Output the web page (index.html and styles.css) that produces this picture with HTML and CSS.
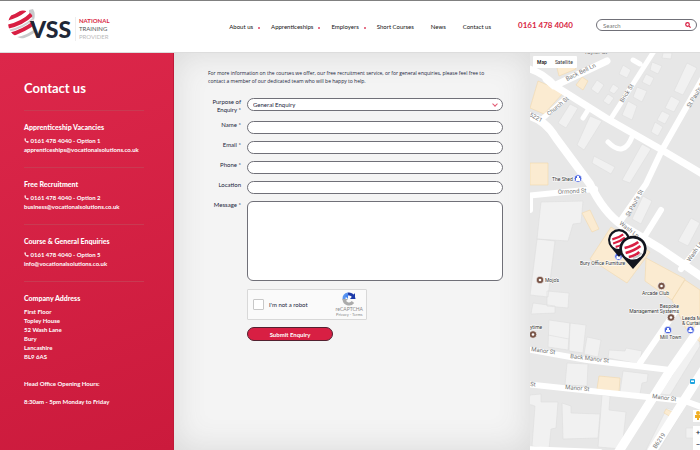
FILE: index.html
```html
<!DOCTYPE html>
<html lang="en">
<head>
<meta charset="utf-8">
<title>Contact us | VSS</title>
<link rel="stylesheet" href="styles.css">
</head>
<body>
<header class="header">
  <a class="logo" href="#" aria-label="VSS home">
    <svg class="logo-mark" width="67" height="34" viewBox="7 8 67 34">
      <defs><clipPath id="globe"><path d="M19 11 Q27 9 32 15 L38 36 Q30 41 20 38 Q8 34 8 22 Q10 13 19 11Z"/></clipPath></defs>
      <path d="M29 10 l4 -1 q3 5 1 11 l-5 -5z" fill="#c9cacc"/>
      <g clip-path="url(#globe)" fill="none">
        <path d="M6 19 Q16 17 25 10" stroke="#d81f43" stroke-width="4"/>
        <path d="M6 27 Q22 24 32 14" stroke="#d81f43" stroke-width="4"/>
        <path d="M8 31 Q23 28 34 18" stroke="#d0d1d3" stroke-width="2"/>
        <path d="M9 35 Q24 31 35 22" stroke="#d81f43" stroke-width="4"/>
        <path d="M15 39 Q28 37 37 29" stroke="#c9cacc" stroke-width="3"/>
      </g>
      <text class="logo-name" x="30" y="38">VSS</text>
    </svg>
    <span class="tagline"><b>NATIONAL</b><span>TRAINING</span><i>PROVIDER</i></span>
  </a>
  <nav class="nav">
    <a class="has-menu" href="#">About us</a>
    <a class="has-menu" href="#">Apprenticeships</a>
    <a class="has-menu" href="#">Employers</a>
    <a href="#">Short Courses</a>
    <a href="#">News</a>
    <a href="#">Contact us</a>
  </nav>
  <a class="phone" href="tel:01614784040">0161 478 4040</a>
  <form class="search">
    <input type="search" placeholder="Search" aria-label="Search">
    <button type="button" aria-label="Search"><svg width="6" height="6" viewBox="0 0 6 6"><circle cx="2.5" cy="2.5" r="1.8"/><path d="M4 4 L5.6 5.6"/></svg></button>
  </form>
</header>
<main class="page">
  <aside class="sidebar">
    <h1>Contact us</h1>
    <section>
      <h2>Apprenticeship Vacancies</h2>
      <p><svg class="tel" viewBox="0 0 10 10"><path d="M1 1 L3 .5 L4 3 L3 4 Q4 6 6 7 L7 6 L9.500 7 L9 9 Q7 10 4 8 Q0 5 1 1Z"/></svg> 0161 478 4040 - Option 1<br><a href="#">apprenticeships@vocationalsolutions.co.uk</a></p>
    </section>
    <section>
      <h2>Free Recruitment</h2>
      <p><svg class="tel" viewBox="0 0 10 10"><path d="M1 1 L3 .5 L4 3 L3 4 Q4 6 6 7 L7 6 L9.500 7 L9 9 Q7 10 4 8 Q0 5 1 1Z"/></svg> 0161 478 4040 - Option 2<br><a href="#">business@vocationalsolutions.co.uk</a></p>
    </section>
    <section>
      <h2>Course &amp; General Enquiries</h2>
      <p><svg class="tel" viewBox="0 0 10 10"><path d="M1 1 L3 .5 L4 3 L3 4 Q4 6 6 7 L7 6 L9.500 7 L9 9 Q7 10 4 8 Q0 5 1 1Z"/></svg> 0161 478 4040 - Option 5<br><a href="#">info@vocationalsolutions.co.uk</a></p>
    </section>
    <section>
      <h2>Company Address</h2>
      <p>First Floor<br>Topley House<br>52 Wash Lane<br>Bury<br>Lancashire<br>BL9 6AS</p>
      <p class="hours">Head Office Opening Hours:</p>
      <p class="times">8:30am - 5pm Monday to Friday</p>
    </section>
  </aside>
  <form class="enquiry">
    <p class="intro">For more information on the courses we offer, our free recruitment service, or for general enquiries, please feel free to contact a member of our dedicated team who will be happy to help.</p>
    <div class="fields">
      <label for="purpose">Purpose of Enquiry *</label>
      <div class="select"><select id="purpose"><option>General Enquiry</option></select></div>
      <label for="name">Name *</label><input id="name" type="text">
      <label for="email">Email *</label><input id="email" type="email">
      <label for="phone">Phone *</label><input id="phone" type="tel">
      <label for="location">Location</label><input id="location" type="text">
      <label for="message">Message *</label><textarea id="message"></textarea>
      <div class="captcha">
        <input id="robot" type="checkbox"><label for="robot">I'm not a robot</label>
        <div class="brand">
          <svg width="14" height="14" viewBox="0 0 14 14" fill="none" stroke-width="3">
            <path d="M2 7 A5 5 0 0 1 6 2" stroke="#5b95ee"/><path d="M6 2 A5 5 0 0 1 12 7" stroke="#1c3aa9"/><path d="M13 1 V7 H8Z" fill="#1c3aa9"/><path d="M6 2 V7 L3 4Z" fill="#4285f4"/><path d="M2 7 A5 5 0 0 0 11 10" stroke="#ababab"/><path d="M0 7 H6 L3 10Z" fill="#ababab"/>
          </svg>
          <span>reCAPTCHA</span><small>Privacy - Terms</small>
        </div>
      </div>
      <button class="submit" type="submit">Submit Enquiry</button>
    </div>
  </form>
  <section class="map" aria-label="Map">
    <svg class="streets" viewBox="530 53 170 397" preserveAspectRatio="xMinYMin slice">
      <rect x="530" y="53" width="400" height="800" fill="#e7e7e7"/>
      <g fill="#f1f1f1" stroke="#dedede" stroke-width=".6">
        <path d="M597 80l7 5-6 9-7-5zM613 84l6 4-5 6-5-3zM623 65l8 5-4 8-8-4zM608 94l6 4-5 7-6-4zM652 62l10 4-4 8-8-4zM646 74l8 4-4 8-8-4zM637 87l10 4-5 11-9-5zM628 101l9 5-5 14-10-5z"/>
        <path d="M570 104l8 4-12 20-8-5zM590 116l12 5-18 29-7-5zM594 156l21 11-4 7-19-11zM642 144l9 5-21 34-8-3zM687 63l10 5-14 27-9-4zM671 96l9 5-6 11-9-4zM662 111l8 4-5 9-8-4zM655 122l8 5-5 9-7-4zM663 53h9l-1 6-9-1z"/>
        <path d="M541 202l42-1-2 22-8 1-5 17-31-2zM537 239l18 2-7 56-18-2zM643 196l9 5-11 23-9-5zM691 218l9 5-12 23-10-5zM547 291l22 2-1 15-21-2zM533 303l22 3v7l-24 1z"/>
        <path d="M549 320l21 3-2 27-20-3zM570 323l16 2-3 28-14-2zM587 337l14 3-3 17-14-3zM548 335l21 4M567 363l21 1-1 22-22-1zM609 350l16 1 1-3 16 3-3 13-31-6zM623 371l25 3-1 8-5 1-2 11-20-2zM530 395l11-1v8h17l-2 26-5 1-2 20-17-3 3-40-7-2zM562 403l9 3v7l29 1-2 24-35 1zM602 395l8 1-1 14 17 2-4 37-24-2zM660 394l38-58 2 10-30 49zM667 408l14 5-22 37h-13zM686 428h12v10h-12z"/>
      </g>
      <g fill="#fbebd1" stroke="#f1d9ad" stroke-width=".6">
        <path d="M538 81l26 11-20 22-14-6zM557 68l15-6 4 7-17 7zM582 77l6 4-5 9-7-5zM530 163h18v22h-18zM582 213l8-3 9 19-7 3zM611 227l39 25-23 31-37-24zM646 258l39 21-13 21-27-19zM685 280l15 10v52l-14-13-14-29zM599 376l21 2-1 14-22-3zM666 409l8 4-3 4-7-4z"/>
      </g>
      <g fill="none" stroke="#fff" stroke-linecap="round" stroke-linejoin="round" stroke-width="6">
        <path d="M526 68Q543 72 555 86L606 118 662 150 704 175M546 79L554 86 607 61" stroke-width="7"/>
        <path d="M610 120L656 48M640 64L633 60M588 110L583 118M608 142Q624 158 632 137M565 99L542 119" stroke-width="5"/>
        <path d="M525 115Q544 118 556 138L590 184Q603 212 623 226L661 249 705 279" stroke-width="8"/>
        <path d="M704 76L662 150 646 184 619 223M661 210L643 239M704 241L681 269"/>
        <path d="M525 196L595 189M530 196V210M526 349L587 360 670 370M675 312L640 363M526 384L685 401 704 408M526 449L600 452"/>
        <path d="M700 328L668 374 616 456M704 369L650 454" stroke-width="9"/>
      </g>
      <g class="street-names">
        <text transform="translate(567 81) rotate(-26)">Back Bell Ln</text><text transform="translate(623 103) rotate(-58)">Brick St</text><text transform="translate(549 116) rotate(-40)">Church St</text><text transform="translate(690 108) rotate(-59)">St Paul's St</text><text transform="translate(529 116) rotate(28)">5221</text>
        <text transform="translate(558 194) rotate(-3)">Ormond St</text><text transform="translate(629 217) rotate(-61)">St Paul's St</text><text transform="translate(619 224) rotate(38)">Wash Ln</text><text transform="translate(690 262) rotate(-56)">Wash Ln</text>
        <text transform="translate(531 351) rotate(8)">Manor St</text><text transform="translate(570 358) rotate(7)">Back Manor St</text><text transform="translate(530 386) rotate(5)">St</text><text transform="translate(565 389) rotate(5)">Manor St</text><text transform="translate(652 398) rotate(8)">Manor St</text><text transform="translate(656 449) rotate(-56)">B6219</text><text x="584" y="54">Taylor St</text>
      </g>
      <g class="places">
        <text x="552" y="181">The Shed</text><text x="580" y="265">Bury Office Furniture</text><text x="545" y="282">Mojo's</text><text x="642" y="295">Arcade Club</text><text x="679" y="308" text-anchor="end">Bespoke</text><text x="679" y="313" text-anchor="end">Management Systems</text><text x="682" y="320">Leeda Mills</text><text x="682" y="325">&amp; Curtains</text><text x="660" y="339">Mill Town</text><text x="530" y="329">ytime</text>
      </g>
      <g stroke="#fff" stroke-width=".7">
        <g fill="#4b65df"><circle cx="578" cy="178.500" r="3.800"/><circle cx="618.500" cy="256.500" r="3.800"/><circle cx="668" cy="330" r="3.800"/><circle cx="690.500" cy="330" r="3.800"/></g>
        <g fill="#795548"><circle cx="540" cy="280" r="3.800"/><circle cx="661.500" cy="286" r="3.800"/><circle cx="671" cy="317.500" r="3.800"/><circle cx="533" cy="334.500" r="3.800"/></g>
      </g>
      <g fill="#fff"><path d="M576 178h4v3h-4zM577 176h2v2h-2zM616.500 256h4v3h-4zM666 330h4v2h-4zM667 328h2v2h-2zM688.500 330h4v2h-4zM689.500 328h2v2h-2z"/><circle cx="540" cy="280" r="1.300"/><circle cx="661.500" cy="286" r="1.300"/><circle cx="671" cy="317.500" r="1.300"/><circle cx="533" cy="334.500" r="1.300"/></g>
      <rect x="690" y="379" width="5" height="5" rx="1" fill="#20a5df"/><path d="M691 380.500h3v1.500h-3z" fill="#fff"/>
      <defs>
        <g id="pin">
          <path d="M0 19 L-10 7 A13 13 0 1 1 10 7Z" fill="#11151f"/>
          <circle cy="-1" r="10.500" fill="#fff"/>
          <g fill="none" stroke="#d81f43" stroke-width="2.600"><path d="M-8 -2 Q0 -4 5 -8"/><path d="M-7 3 Q1 1 7 -4"/><path d="M-4 7 Q2 6 6 2"/></g>
          <path d="M0 8 Q5 7 8 3" fill="none" stroke="#c9cacc" stroke-width="1.800"/>
        </g>
      </defs>
      <use href="#pin" transform="translate(619 241) scale(.84)"/>
      <use href="#pin" transform="translate(633 250) scale(1.050 1)"/>
    </svg>
    <div class="map-type"><button type="button"><b>Map</b></button><button type="button">Satellite</button></div>
    <div class="map-tools">
      <button type="button" aria-label="Street View"><svg width="8" height="9" viewBox="0 0 8 9"><circle cx="4" cy="2" r="2" fill="#f0ad22"/><path d="M1 4h6v3H5v2H3V7H1z" fill="#f0ad22"/></svg></button>
      <div class="zoom"><button type="button" aria-label="Zoom in">+</button><button type="button" aria-label="Zoom out">−</button></div>
    </div>
  </section>
</main>
</body>
</html>
```
FILE: styles.css
```css
* { box-sizing: border-box; }
body { margin: 0; min-height: 100vh; display: flex; flex-direction: column; font-family: Lato, sans-serif; font-size: 6px; color: #20243a; background: #fff; overflow: hidden; }
a { color: inherit; text-decoration: none; }
h1, h2, p { margin: 0; }
button, input, select, textarea { font: inherit; color: inherit; margin: 0; padding: 0; }

.header { min-height: 53px; display: flex; align-items: center; padding: 0 3px 3px 7px; border-top: 1px solid #808080; border-bottom: 1px solid #ddd; }
.logo { display: flex; align-items: center; gap: 1px; }
.logo-mark { overflow: visible; }
.logo-name { font: 900 23px Lato, sans-serif; fill: #202736; }
.tagline { display: flex; flex-direction: column; margin-top: 7px; padding-left: 3px; border-left: 1px solid #eee; font-size: 6px; line-height: 8px; color: #555; }
.tagline b { color: #d81f43; font-weight: 700; }
.tagline i { color: #bbb; font-style: normal; }
.nav { display: flex; margin-left: auto; padding-top: 2px; gap: 17px; color: #111; }
.has-menu { display: flex; align-items: center; gap: 5px; margin-right: -6px; }
.has-menu::after { content: ""; width: 2px; height: 2px; margin-top: 3px; background: #e67389; }
.phone { margin-left: 27px; color: #d81f43; font-size: 8px; font-weight: 700; }
.search { display: flex; align-items: center; width: 101px; height: 12px; margin-left: 23px; padding: 0 5px 0 6px; border: 1px solid #707078; border-radius: 6px; background: #fff; }
.search input { flex: 1; min-width: 0; border: 0; outline: 0; background: none; appearance: none; }
.search input::placeholder { color: #777; }
.search button { display: flex; border: 0; background: none; }
.search svg { fill: none; stroke: #d81f43; stroke-width: 1.2; }

.page { flex: 1; display: grid; grid-template-columns: 174fr 356fr 170fr; }
.sidebar { padding: 27px 29px 16px 24px; background: linear-gradient(160deg, #dc274a, #cb1a3c); color: #fff; line-height: 9px; border-right: 1px solid #c01938; font-weight: 700; }
.sidebar h1 { font-size: 13px; line-height: 16px; margin-bottom: 14px; }
.sidebar section { border-top: 1px solid #c93a52; padding: 11px 0 13px; white-space: nowrap; }
.sidebar h2 { font-size: 7px; font-weight: 900; line-height: 10px; margin-bottom: 4px; }
.tel { width: 5px; height: 5px; fill: #fff; }
.hours { margin-top: 18px; }
.times { margin-top: 9px; }

.enquiry { padding: 16px 27px 16px 34px; background: #f4f4f4; box-shadow: inset 0 0 32px #d8d8d8; }
.intro { padding-right: 10px; font-family: "Open Sans", sans-serif; font-size: 5px; line-height: 8px; }
.fields { display: grid; grid-template-columns: 33px 1fr; column-gap: 6px; row-gap: 7px; margin-top: 13px; }
.fields > label { text-align: right; line-height: 8px; }
.fields > input, .select, .fields textarea { width: 100%; height: 13px; border: 1px solid #707078; border-radius: 7px; background: #fff; }
.fields textarea { display: block; height: 80px; border-radius: 6px; resize: none; }
.select { display: flex; align-items: center; padding: 0 5px; }
.select select { flex: 1; border: 0; appearance: none; background: none; }
.select::after { content: ""; width: 3px; height: 3px; margin-bottom: 2px; border: solid #e35a74; border-width: 0 1px 1px 0; transform: rotate(45deg); }
.captcha { grid-column: 2; display: flex; align-items: center; gap: 5px; width: 120px; height: 31px; margin-top: 1px; padding: 0 3px 0 5px; border: 1px solid #d8d8d8; border-radius: 1px; background: #fafafa; }
.captcha input { appearance: none; width: 11px; height: 11px; border: 1px solid #c8c8c8; border-radius: 1px; background: #fff; }
.brand { display: flex; flex-direction: column; align-items: center; margin-left: auto; color: #888; font-size: 5px; line-height: 6px; }
.brand small { font-size: 4px; line-height: 5px; }
.submit { grid-column: 2; width: 86px; height: 14px; border: 1px solid #52202f; border-radius: 7px; background: #d81f43; color: #fff; font-weight: 700; }

.map { position: relative; overflow: hidden; background: #e7e7e7; }
.streets { position: absolute; width: 100%; height: 100%; }
.street-names { font: 6px Roboto, sans-serif; fill: #777; }
.places { font: 400 5px Roboto, sans-serif; fill: #333; stroke: #fff; stroke-width: 1px; paint-order: stroke; }
.map-type { position: absolute; top: 3px; left: 3px; display: flex; background: #fff; border-radius: 1px; }
.map-type button { height: 12px; padding: 0 4px; border: 0; background: none; font: 5px Roboto, sans-serif; color: #333; }
.map-tools { position: absolute; right: 0; bottom: 0; display: grid; gap: 4px; width: 7px; overflow: hidden; }
.map-tools button { display: block; width: 10px; height: 12px; border: 0; background: #fff; font: 8px Roboto, sans-serif; }
```
